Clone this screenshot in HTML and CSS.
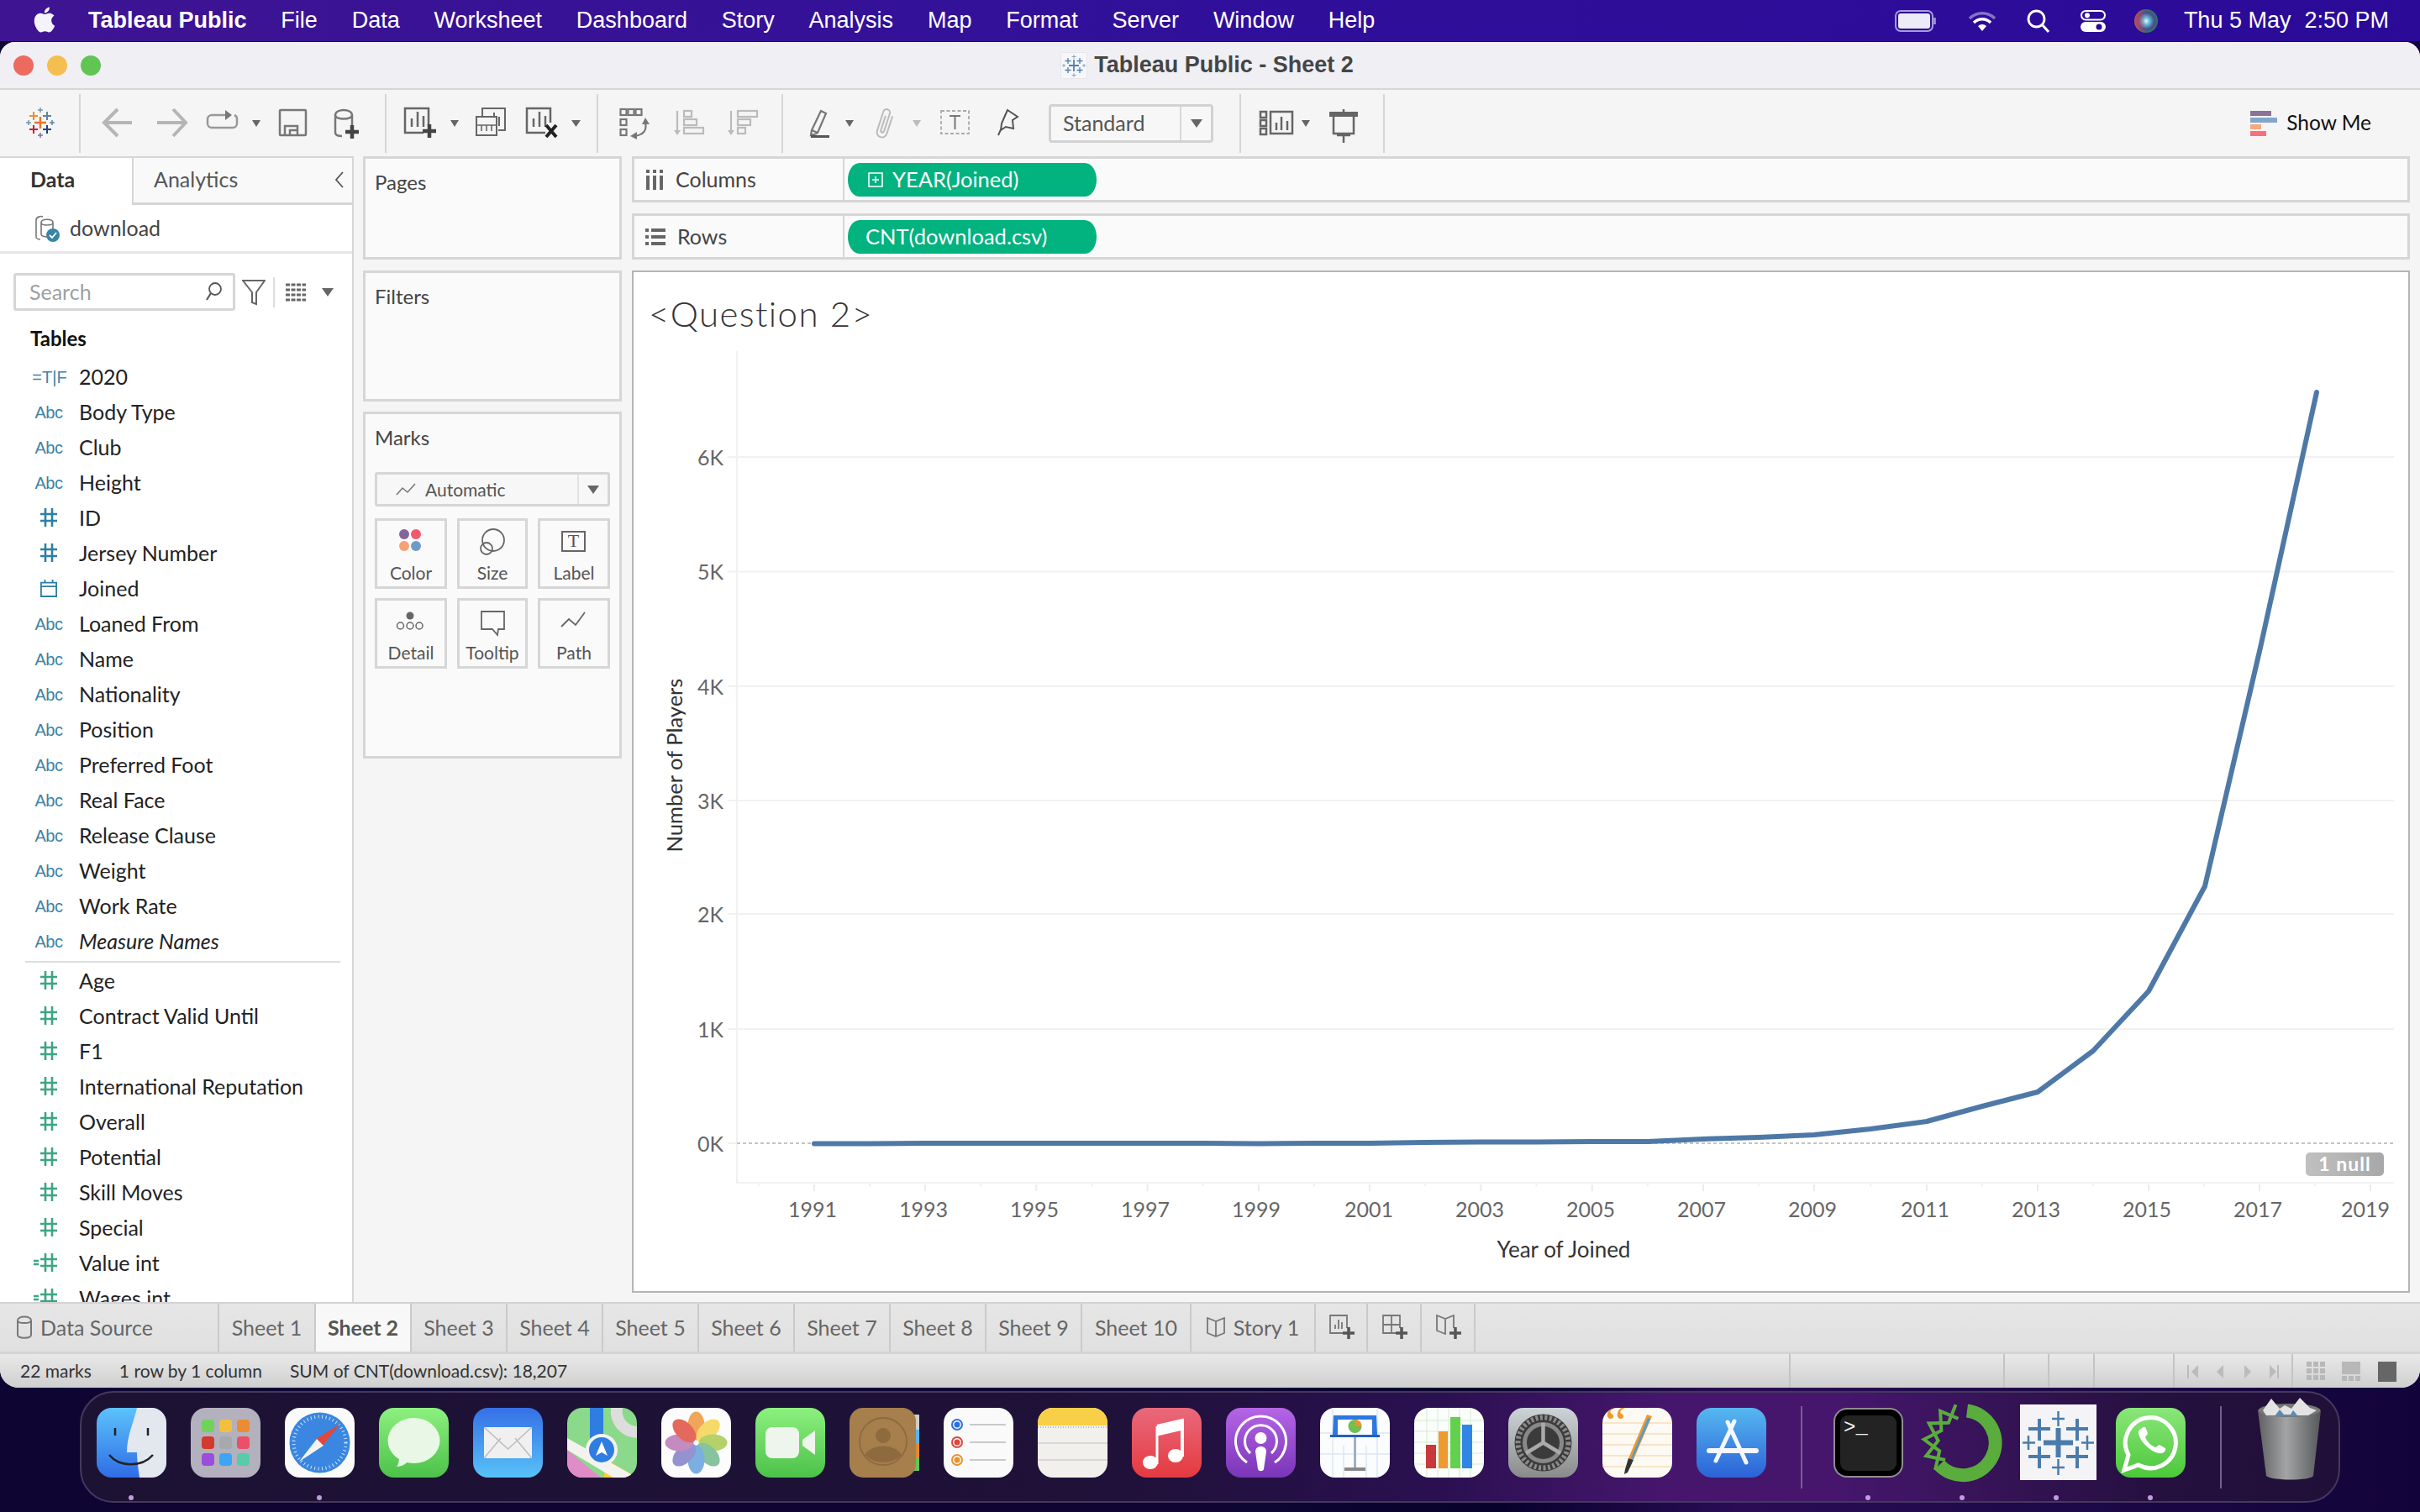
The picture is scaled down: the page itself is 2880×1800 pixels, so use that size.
FILE: index.html
```html
<!DOCTYPE html>
<html lang="en">
<head>
<meta charset="utf-8">
<title>Tableau Public - Sheet 2</title>
<link rel="stylesheet" href="styles.css">
</head>
<body>
<div class="screen">
  <header class="menubar">
    <svg class="apple" viewBox="0 0 24 24"><path d="M12.152 6.896c-.948 0-2.415-1.078-3.96-1.04-2.04.027-3.91 1.183-4.961 3.014-2.117 3.675-.546 9.103 1.519 12.09 1.013 1.454 2.208 3.09 3.792 3.039 1.52-.065 2.09-.987 3.935-.987 1.831 0 2.35.987 3.96.948 1.637-.026 2.676-1.48 3.676-2.948 1.156-1.688 1.636-3.325 1.662-3.415-.039-.013-3.182-1.221-3.22-4.857-.026-3.04 2.48-4.494 2.597-4.559-1.429-2.09-3.623-2.324-4.39-2.376-2-.156-3.675 1.09-4.61 1.09zM15.53 3.83c.843-1.012 1.4-2.427 1.245-3.83-1.207.052-2.662.805-3.532 1.818-.78.896-1.454 2.338-1.273 3.714 1.338.104 2.715-.688 3.559-1.701"/></svg>
    <nav class="menu">
      <span class="menu-app">Tableau Public</span><span>File</span><span>Data</span><span>Worksheet</span><span>Dashboard</span><span>Story</span><span>Analysis</span><span>Map</span><span>Format</span><span>Server</span><span>Window</span><span>Help</span>
    </nav>
    <div class="tray">
      <svg class="t-batt" viewBox="0 0 50 26"><rect x="1" y="1" width="44" height="24" rx="6" fill="none" stroke="#a79bdc" stroke-width="2"/><rect x="4" y="4" width="38" height="18" rx="3" fill="#ecebf7"/><path d="M47.500 9v8" stroke="#a79bdc" stroke-width="2.500"/></svg>
      <svg class="t-wifi" viewBox="0 0 34 24"><path d="M2 9a21 21 0 0 1 30 0" fill="none" stroke="#8673c9" stroke-width="3.500"/><path d="M7 14a14 14 0 0 1 20 0" fill="none" stroke="#fff" stroke-width="3.500"/><path d="M12 18a7 7 0 0 1 10 0l-5 6z" fill="#fff"/></svg>
      <svg class="t-search" viewBox="0 0 28 28"><circle cx="11.500" cy="11.500" r="9.500" fill="none" stroke="#fff" stroke-width="2.800"/><path d="M18 18l8 9" stroke="#fff" stroke-width="3"/></svg>
      <svg class="t-ctrl" viewBox="0 0 30 26"><rect x="1" y="1" width="28" height="10.500" rx="5.200" fill="none" stroke="#fff" stroke-width="2"/><circle cx="8" cy="6.200" r="3" fill="#fff"/><rect y="14" width="30" height="12" rx="6" fill="#fff"/><circle cx="22" cy="20" r="3.500" fill="#2a0a96"/></svg>
      <svg class="t-siri" viewBox="0 0 28 28"><defs><radialGradient id="siri"><stop offset="0" stop-color="#f4f4ff"/><stop offset=".3" stop-color="#5cc0d8"/><stop offset=".7" stop-color="#4a4a90"/><stop offset="1" stop-color="#2f7a60"/></radialGradient><linearGradient id="siri2" x1="0" x2="1"><stop offset="0" stop-color="#e0405a" stop-opacity=".85"/><stop offset=".5" stop-color="#e0405a" stop-opacity="0"/></linearGradient></defs><circle cx="14" cy="14" r="14" fill="url(#siri)"/><circle cx="14" cy="14" r="14" fill="url(#siri2)"/></svg>
      <span class="t-date">Thu 5 May</span><span class="t-time">2:50 PM</span>
    </div>
  </header>

  <div class="window">
    <div class="titlebar">
      <div class="lights"><i class="light red"></i><i class="light yellow"></i><i class="light green"></i></div>
      <div class="wtitle">
        <svg class="doc" viewBox="0 0 30 30"><rect width="30" height="30" fill="#f7f7fa"/><g stroke="#4f81b1" stroke-width="1.800"><path d="M15 8v14M9 15h12"/><path d="M8 6v7M4.500 9.500h7M22 6v7M18.500 9.500h7M8 17v7M4.500 20.500h7M22 17v7M18.500 20.500h7" stroke-width="1.300"/><path d="M15 2v5M12.500 4.500h5M15 24v5M12.500 26.500h5M3 13v4M1 15h4M27 13v4M25 15h4" stroke-width="1" stroke="#86a7c6"/></g></svg>
        <span>Tableau Public - Sheet 2</span>
      </div>
      <div></div>
    </div>

    <div class="toolbar">
      <div class="tg tg1">
        <svg width="94" height="70" viewBox="0 112 94 70"><g fill="none" stroke-width="2"><path d="M48 139v14M41 146h14" stroke="#e8762d" stroke-width="2.500"/><path d="M40 133v10M35 138h10" stroke="#f28e2b"/><path d="M56 133v10M51 138h10" stroke="#5b879b"/><path d="M40 149v10M35 154h10" stroke="#c72035"/><path d="M56 149v10M51 154h10" stroke="#1f447e"/><path d="M48 128v6M45 131h6" stroke="#7099a6" stroke-width="1.500"/><path d="M48 158v6M45 161h6" stroke="#7f6f9f" stroke-width="1.500"/><path d="M34 143v6M31 146h6" stroke="#7099a6" stroke-width="1.500"/><path d="M62 143v6M59 146h6" stroke="#59879b" stroke-width="1.500"/></g></svg>
      </div>
      <div class="tg tg2">
        <svg width="362" height="70" viewBox="96 112 362 70"><g fill="none"><path d="M157 146h-32M140 130l-16 16 16 16M187 146h32M206 130l15 16-15 16" stroke="#b5b5b5" stroke-width="4"/><path d="M270 137h-18a5 5 0 0 0-5 5v5a5 5 0 0 0 5 5h25a5 5 0 0 0 5-5v-5a5 5 0 0 0-3-5" stroke="#999" stroke-width="2.500"/><path d="M268 131l8 6-8 6z" fill="#777"/><rect x="333" y="131" width="31" height="30" rx="1" stroke="#777" stroke-width="2.500"/><path d="M339 161v-11h15v11M345 161v-6h9" stroke="#777" stroke-width="2.500"/><path d="M419 150v-13c0-8-20-8-20 0v21c0 3 4 4 8 4M399 137c0 6 20 6 20 0" stroke="#777" stroke-width="2.500"/><path d="M419 149v16M411 157h16" stroke="#444" stroke-width="4.500"/></g><path d="M300 143h10l-5 8z" fill="#666"/></svg>
      </div>
      <div class="tg tg3">
        <svg width="250" height="70" viewBox="460 112 250 70"><g fill="none"><path d="M510 150v-21h-28v29h22M490 151v-10M497 151v-18M504 151v-13" stroke="#666" stroke-width="2.500"/><path d="M511 148v16M503 156h16" stroke="#444" stroke-width="4.500"/><path d="M574 138v-9h27v26h-8M582 150v-10M588 150v-16M594 150v-11" stroke="#666" stroke-width="2"/><rect x="567" y="139" width="24" height="22" fill="#f5f5f5" stroke="#666" stroke-width="2"/><path d="M567 149h24M573 149v7M579 149v7M585 149v7" stroke="#666" stroke-width="1.600"/><path d="M655 146v-17h-28v29h22M635 151v-10M642 151v-18M649 151v-13" stroke="#666" stroke-width="2.500"/><path d="M650 149l12 14M662 149l-12 14" stroke="#222" stroke-width="4"/></g><path d="M536 143h10l-5 8zM680 143h11l-5.500 8z" fill="#666"/></svg>
      </div>
      <div class="tg tg4">
        <svg width="218" height="70" viewBox="712 112 218 70"><g fill="none" stroke="#777" stroke-width="2.200"><rect x="738.500" y="130" width="7" height="7"/><rect x="747.500" y="130" width="7" height="7"/><rect x="756.500" y="130" width="7" height="7"/><rect x="738.500" y="142" width="7" height="7"/><rect x="738.500" y="154" width="7" height="7"/><path d="M768 147c2 8-2 13-12 15"/></g><path d="M768 140l5 8h-9zM750 162l8-5v9z" fill="#777"/><g fill="none" stroke="#bbb" stroke-width="2.200"><path d="M806 132v26"/><rect x="814" y="132" width="9" height="7"/><rect x="814" y="142" width="15" height="7"/><rect x="814" y="152" width="23" height="7"/><path d="M870 132v26"/><rect x="878" y="132" width="23" height="7"/><rect x="878" y="142" width="15" height="7"/><rect x="878" y="152" width="9" height="7"/></g><path d="M802 155h8l-4 6zM866 155h8l-4 6z" fill="#bbb"/></svg>
      </div>
      <div class="tg tg5">
        <svg width="316" height="70" viewBox="932 112 316 70"><g fill="none"><path d="M966 155l11-23 6 3-10 23zM966 155l-1 6 7-2" stroke="#777" stroke-width="2.200"/><path d="M965 162.500h22" stroke="#555" stroke-width="3"/><path d="M1059 136v22a6 6 0 0 1-12 0v-24a4 4 0 0 1 8 0v22a2 2 0 0 1-4 0v-18" transform="rotate(18 1053 147)" stroke="#bbb" stroke-width="2"/><rect x="1120" y="132" width="33" height="27" stroke="#aaa" stroke-width="1.800" stroke-dasharray="4 2.500"/><path d="M1130 138h13M1136.500 138v16" stroke="#777" stroke-width="2"/><path d="M1199 131l12 8-6 4 1 10-9-2-6 4 1-8 3-7zM1192 152l-4 9" stroke="#555" stroke-width="2"/></g><path d="M1006 143h10l-5 8z" fill="#666"/><path d="M1086 143h10l-5 8z" fill="#bbb"/></svg>
        <div class="std"><span class="std-label">Standard</span><span class="std-btn"><i class="caret"></i></span></div>
      </div>
      <div class="tg tg6">
        <svg width="168" height="70" viewBox="1478 112 168 70"><g fill="none" stroke="#666" stroke-width="2.500"><rect x="1501" y="133" width="7" height="7"/><rect x="1501" y="143" width="7" height="7"/><rect x="1501" y="153" width="7" height="7"/><rect x="1513" y="133" width="26" height="26"/><path d="M1520 155v-9M1526 155v-16M1533 155v-11"/><path d="M1600 130v6M1588 136v23h24v-23M1600 159v11M1592 161h16"/></g><path d="M1583 133h34v6h-34z" fill="#666"/><path d="M1550 143h10l-5 8z" fill="#666"/></svg>
      </div>
      <div class="showme">
        <div class="sm-bars"><i class="sm1"></i><i class="sm2"></i><i class="sm3"></i><i class="sm4"></i></div>
        <span class="sm-text">Show Me</span>
      </div>
    </div>

    <div class="main">
      <aside class="datapane">
        <div class="dtabs"><div class="dtab-data">Data</div><div class="dtab-an"><span>Analytics</span><svg width="10" height="20" viewBox="0 0 10 20"><path d="M9 1L1 10l8 9" fill="none" stroke="#555" stroke-width="1.800"/></svg></div></div>
        <div class="source">
          <svg width="34" height="34" viewBox="0 0 34 34"><g fill="none" stroke="#777" stroke-width="1.600"><path d="M26 10c0-5-14-5-14 0v14c0 2 4 3 7 3M12 10c0 4 14 4 14 0v9M6 7v20c0 2 3 3 5 3M6 7c0-4 6-5 8-4"/></g><circle cx="26" cy="25" r="8" fill="#3a84a8"/><path d="M22 25l3 3 5-6" fill="none" stroke="#fff" stroke-width="1.800"/></svg>
          <span class="src-text">download</span>
        </div>
        <div class="searchrow">
          <div class="search"><span>Search</span><svg width="20" height="24" viewBox="0 0 20 24"><circle cx="12" cy="9" r="7" fill="none" stroke="#555" stroke-width="1.800"/><path d="M7 14l-5 8" stroke="#555" stroke-width="2"/></svg></div>
          <svg class="fil" width="28" height="32" viewBox="0 0 28 32"><path d="M1 2h26L17 16v14l-5-2V16z" fill="none" stroke="#666" stroke-width="2"/></svg>
          <i class="sdiv"></i>
          <svg class="lst" width="26" height="24" viewBox="0 0 26 24"><path d="M1 3h24M1 9h24M1 15h24M1 21h24" stroke="#666" stroke-width="3" stroke-dasharray="5 1.500"/></svg>
          <i class="caret carets"></i>
        </div>
        <div class="tables">Tables</div>
        <ul class="fields">
          <li><span class="ft bl tf">=T|F</span>2020</li>
          <li><span class="ft bl">Abc</span>Body Type</li>
          <li><span class="ft bl">Abc</span>Club</li>
          <li><span class="ft bl">Abc</span>Height</li>
          <li><span class="ft"><svg class="hash hb" viewBox="0 0 20 24"><path d="M6 1v22M14 1v22M0 8h20M0 16h20"/></svg></span>ID</li>
          <li><span class="ft"><svg class="hash hb" viewBox="0 0 20 24"><path d="M6 1v22M14 1v22M0 8h20M0 16h20"/></svg></span>Jersey Number</li>
          <li><span class="ft"><svg class="hash hb" viewBox="0 0 22 24"><path d="M1 5h20v18H1zM1 10h20M6 1v5M16 1v5" stroke-width="2"/></svg></span>Joined</li>
          <li><span class="ft bl">Abc</span>Loaned From</li>
          <li><span class="ft bl">Abc</span>Name</li>
          <li><span class="ft bl">Abc</span>Nationality</li>
          <li><span class="ft bl">Abc</span>Position</li>
          <li><span class="ft bl">Abc</span>Preferred Foot</li>
          <li><span class="ft bl">Abc</span>Real Face</li>
          <li><span class="ft bl">Abc</span>Release Clause</li>
          <li><span class="ft bl">Abc</span>Weight</li>
          <li><span class="ft bl">Abc</span>Work Rate</li>
          <li class="it"><span class="ft bl">Abc</span>Measure Names</li>
          <li class="sep"></li>
          <li><span class="ft"><svg class="hash hg" viewBox="0 0 20 24"><path d="M6 1v22M14 1v22M0 8h20M0 16h20"/></svg></span>Age</li>
          <li><span class="ft"><svg class="hash hg" viewBox="0 0 20 24"><path d="M6 1v22M14 1v22M0 8h20M0 16h20"/></svg></span>Contract Valid Until</li>
          <li><span class="ft"><svg class="hash hg" viewBox="0 0 20 24"><path d="M6 1v22M14 1v22M0 8h20M0 16h20"/></svg></span>F1</li>
          <li><span class="ft"><svg class="hash hg" viewBox="0 0 20 24"><path d="M6 1v22M14 1v22M0 8h20M0 16h20"/></svg></span>International Reputation</li>
          <li><span class="ft"><svg class="hash hg" viewBox="0 0 20 24"><path d="M6 1v22M14 1v22M0 8h20M0 16h20"/></svg></span>Overall</li>
          <li><span class="ft"><svg class="hash hg" viewBox="0 0 20 24"><path d="M6 1v22M14 1v22M0 8h20M0 16h20"/></svg></span>Potential</li>
          <li><span class="ft"><svg class="hash hg" viewBox="0 0 20 24"><path d="M6 1v22M14 1v22M0 8h20M0 16h20"/></svg></span>Skill Moves</li>
          <li><span class="ft"><svg class="hash hg" viewBox="0 0 20 24"><path d="M6 1v22M14 1v22M0 8h20M0 16h20"/></svg></span>Special</li>
          <li><span class="ft"><svg class="hash hg calc" viewBox="0 0 28 24"><path d="M14 1v22M22 1v22M8 8h20M8 16h20M0 10h6M0 14h6"/></svg></span>Value int</li>
          <li><span class="ft"><svg class="hash hg calc" viewBox="0 0 28 24"><path d="M14 1v22M22 1v22M8 8h20M8 16h20M0 10h6M0 14h6"/></svg></span>Wages int</li>
        </ul>
      </aside>

      <section class="cards">
        <div class="card c-pages"><h3>Pages</h3></div>
        <div class="card c-filters"><h3>Filters</h3></div>
        <div class="card c-marks">
          <h3>Marks</h3>
          <div class="markdd">
            <svg width="24" height="16" viewBox="0 0 24 16"><path d="M1 14l7-8 6 5 9-10" fill="none" stroke="#777" stroke-width="1.600"/></svg>
            <span class="md-text">Automatic</span><span class="md-btn"><i class="caret"></i></span>
          </div>
          <div class="markgrid">
            <div class="mk"><svg viewBox="465 625 48 44"><circle cx="481" cy="636" r="6" fill="#84659a"/><circle cx="495" cy="636" r="6" fill="#f0596e"/><circle cx="481" cy="650" r="6" fill="#f5a176"/><circle cx="495" cy="650" r="6" fill="#6d9bc9"/></svg><span>Color</span></div>
            <div class="mk"><svg viewBox="562 625 48 44"><g fill="none" stroke="#666" stroke-width="1.800"><circle cx="587" cy="643" r="13"/><circle cx="579" cy="653" r="7"/></g></svg><span>Size</span></div>
            <div class="mk"><svg viewBox="659 625 48 44"><rect x="669" y="633" width="27" height="23" fill="none" stroke="#666" stroke-width="2"/><text x="682.500" y="651" class="mk-t">T</text></svg><span>Label</span></div>
            <div class="mk"><svg viewBox="465 720 48 44"><circle cx="488" cy="733" r="4.500" fill="#666"/><g fill="none" stroke="#666" stroke-width="1.500"><circle cx="476.500" cy="745" r="4"/><circle cx="488" cy="745" r="4"/><circle cx="499" cy="745" r="4"/></g></svg><span>Detail</span></div>
            <div class="mk"><svg viewBox="562 720 48 44"><path d="M573 728h27v21h-7l-1 7-6-7h-13z" fill="none" stroke="#666" stroke-width="1.800"/></svg><span>Tooltip</span></div>
            <div class="mk"><svg viewBox="659 720 48 44"><path d="M668 746l9-9 8 7 11-15" fill="none" stroke="#666" stroke-width="1.800"/></svg><span>Path</span></div>
          </div>
        </div>
      </section>

      <section class="work">
        <div class="shelf s-cols">
          <div class="shelf-label"><svg width="22" height="24" viewBox="0 0 22 24"><path d="M1 0h4v4H1zM9 0h4v4H9zM17 0h4v4h-4z" fill="#666"/><path d="M1 7h4v17H1zM9 7h4v17H9zM17 7h4v17h-4z" fill="#666"/></svg><span class="sh-text">Columns</span></div>
          <div class="pill"><svg width="18" height="18" viewBox="0 0 18 18"><path d="M1 1h16v16H1zM9 5v8M5 9h8" fill="none" stroke="#fff" stroke-width="1.600"/></svg><span class="sh-text">YEAR(Joined)</span></div>
        </div>
        <div class="shelf s-rows">
          <div class="shelf-label"><svg width="24" height="20" viewBox="0 0 24 20"><path d="M0 0h4v4H0zM7 0h17v4H7zM0 8h4v4H0zM7 8h17v4H7zM0 16h4v4H0zM7 16h17v4H7z" fill="#666"/></svg><span class="sh-text">Rows</span></div>
          <div class="pill pill-cnt"><span class="sh-text">CNT(download.csv)</span></div>
        </div>
        <div class="viz">
          <svg class="chart" viewBox="754 324 2112 1213">
            <text x="772" y="389" class="c-title">&lt;Question 2&gt;</text>
            <g class="grid">
              <path d="M877 418V1408H2849"/>
              <path d="M866 544H2849M866 680.500H2849M866 817H2849M866 953H2849M866 1088H2849M866 1225H2849M866 1361H877"/>
            </g>
            <path class="zero" d="M877 1361H2849"/>
            <g class="ticks"><path d="M969 1410v8M1101 1410v8M1233.300 1410v8M1365.600 1410v8M1497.800 1410v8M1630 1410v8M1762.400 1410v8M1894.700 1410v8M2027 1410v8M2159 1410v8M2293 1410v8M2425 1410v8M2557 1410v8M2689 1410v8M2821 1410v8"/><path d="M903 1410v2M1035 1410v2M1167 1410v2M1299.500 1410v2M1431.700 1410v2M1564 1410v2M1696 1410v2M1828.500 1410v2M1960.800 1410v2M2093 1410v2M2226 1410v2M2359 1410v2M2491 1410v2M2623 1410v2M2755 1410v2"/></g>
            <polyline class="line" points="969,1361.500 1035,1361.500 1101,1361 1167,1361 1234,1361 1300,1361 1366,1361 1432,1361 1498,1361.500 1564,1361 1630,1361 1696,1360 1762,1359.500 1829,1359.500 1895,1359 1961,1359 2027,1356 2093,1354 2159,1351 2226,1344 2293,1335 2359,1317 2425,1300 2491,1251 2557,1180 2624,1055 2690,771 2757,467"/>
            <g class="ylab">
              <text x="861" y="554">6K</text><text x="861" y="690">5K</text><text x="861" y="827">4K</text><text x="861" y="963">3K</text><text x="861" y="1098">2K</text><text x="861" y="1235">1K</text><text x="861" y="1371">0K</text>
            </g>
            <g class="xlab">
              <text x="967" y="1449">1991</text><text x="1099" y="1449">1993</text><text x="1231" y="1449">1995</text><text x="1363" y="1449">1997</text><text x="1495" y="1449">1999</text><text x="1629" y="1449">2001</text><text x="1761" y="1449">2003</text><text x="1893" y="1449">2005</text><text x="2025" y="1449">2007</text><text x="2157" y="1449">2009</text><text x="2291" y="1449">2011</text><text x="2423" y="1449">2013</text><text x="2555" y="1449">2015</text><text x="2687" y="1449">2017</text><text x="2815" y="1449">2019</text>
            </g>
            <text class="axt" x="1861" y="1497">Year of Joined</text>
            <text class="axt axy" transform="translate(812 911) rotate(-90)">Number of Players</text>
            <defs><linearGradient id="nullg" x1="0" x2="1"><stop offset="0" stop-color="#c0c0c0"/><stop offset="1" stop-color="#a8a8a8"/></linearGradient></defs>
            <rect x="2744" y="1372" width="93" height="28" rx="5" fill="url(#nullg)"/>
            <text x="2790.500" y="1394" class="nullt">1 null</text>
          </svg>
        </div>
      </section>
    </div>

    <div class="tabs">
      <div class="tab t-ds"><svg width="18" height="28" viewBox="0 0 18 28"><path d="M1 6c0-6 16-6 16 0v17c0 5-16 5-16 0zM1 6c0 4 16 4 16 0" fill="none" stroke="#777" stroke-width="2"/></svg><span>Data Source</span></div>
      <div class="tab t-s1">Sheet 1</div>
      <div class="tab t-active">Sheet 2</div>
      <div class="tab">Sheet 3</div>
      <div class="tab">Sheet 4</div>
      <div class="tab">Sheet 5</div>
      <div class="tab">Sheet 6</div>
      <div class="tab">Sheet 7</div>
      <div class="tab">Sheet 8</div>
      <div class="tab">Sheet 9</div>
      <div class="tab t-10">Sheet 10</div>
      <div class="tab t-story"><svg width="22" height="24" viewBox="0 0 22 24"><path d="M11 5L1 1v18l10 4 10-4V1zM11 5v18" fill="none" stroke="#777" stroke-width="1.800"/></svg><span>Story 1</span></div>
      <div class="tab t-add"><svg width="32" height="30" viewBox="0 0 32 30"><path d="M20 22H1V1h20v15M7 17v-5M11 17V6M15 17V9" fill="none" stroke="#777" stroke-width="1.800"/><path d="M23 15v14M16 22h14" stroke="#555" stroke-width="3.500"/></svg></div>
      <div class="tab t-add2"><svg width="32" height="30" viewBox="0 0 32 30"><path d="M18 22H1V1h20v15M1 12h20M11 1v21" fill="none" stroke="#777" stroke-width="1.800"/><path d="M23 15v14M16 22h14" stroke="#555" stroke-width="3.500"/></svg></div>
      <div class="tab t-add2"><svg width="32" height="30" viewBox="0 0 32 30"><path d="M11 5L1 1v18l10 4V5l10-4v15" fill="none" stroke="#777" stroke-width="1.800"/><path d="M23 15v14M16 22h14" stroke="#555" stroke-width="3.500"/></svg></div>
    </div>

    <div class="status">
      <span class="st-a">22 marks</span><span class="st-b">1 row by 1 column</span><span class="st-c">SUM of CNT(download.csv): 18,207</span>
      <i class="st-sp s1"></i><i class="st-sp s2"></i><i class="st-sp s3"></i><i class="st-sp s4"></i><i class="st-sp s5"></i>
      <svg class="st-nav" width="110" height="20" viewBox="0 0 110 20"><g fill="#bbb"><path d="M1 2h2v16H1zM14 2v16L6 10zM44 2v16l-8-8zM69 2v16l8-8zM99 2v16l8-8zM108 2h2v16h-2z"/></g></svg>
      <i class="st-sp s6"></i>
      <svg class="st-grid" width="110" height="24" viewBox="0 0 110 24"><g fill="#b8b8b8"><path d="M0 0h6v6H0zM8 0h6v6H8zM16 0h6v6h-6zM0 8h6v6H0zM8 8h6v6H8zM16 8h6v6h-6zM0 16h6v6H0zM8 16h6v6H8zM16 16h6v6h-6z"/><path d="M42 0h22v15H42zM42 17h6v6h-6zM50 17h6v6h-6zM58 17h6v6h-6z"/></g><path d="M85 0h22v24H85z" fill="#666"/></svg>
    </div>
  </div>

  <div class="dock">
    <div class="di"><svg viewBox="0 0 83 83"><defs><linearGradient id="f1" x1="0" y1="0" x2="0" y2="1"><stop offset="0" stop-color="#5cc3fb"/><stop offset="1" stop-color="#2f6ce6"/></linearGradient><clipPath id="rr"><rect width="83" height="83" rx="18"/></clipPath></defs><rect width="83" height="83" rx="18" fill="url(#f1)"/><path d="M48 0h17a18 18 0 0 1 18 18v47a18 18 0 0 1-18 18H51c-2-14-3-22-3-30H36c0-20 8-35 12-53z" fill="#e3e7ee"/><path d="M22 24v9M61 24v9" stroke="#222" stroke-width="2.500"/><path d="M15 56c12 15 39 15 52 0" fill="none" stroke="#222" stroke-width="2.500"/></svg><i class="dot"></i></div>
    <div class="di"><svg viewBox="0 0 83 83"><rect width="83" height="83" rx="18" fill="#b3b1bd"/><g><rect x="13" y="14" width="15" height="15" rx="4" fill="#6fd35a"/><rect x="34" y="14" width="15" height="15" rx="4" fill="#f3c03e"/><rect x="55" y="14" width="15" height="15" rx="4" fill="#ea8c34"/><rect x="13" y="34" width="15" height="15" rx="4" fill="#d33a2c"/><rect x="34" y="34" width="15" height="15" rx="4" fill="#a5a9ac"/><rect x="55" y="34" width="15" height="15" rx="4" fill="#ea5067"/><rect x="13" y="54" width="15" height="15" rx="4" fill="#9b4ddb"/><rect x="34" y="54" width="15" height="15" rx="4" fill="#3ca5f5"/><rect x="55" y="54" width="15" height="15" rx="4" fill="#5acba8"/></g></svg></div>
    <div class="di"><svg viewBox="0 0 83 83"><rect width="83" height="83" rx="18" fill="#fafafa"/><circle cx="41.500" cy="41.500" r="36" fill="#3a86e0"/><circle cx="41.500" cy="41.500" r="31" fill="none" stroke="#cfe4fa" stroke-width="4" stroke-dasharray="1 3.500"/><path d="M66 19L37 37l8 8z" fill="#e0483c"/><path d="M17 64l29-19-8-8z" fill="#f4f4f4"/></svg><i class="dot"></i></div>
    <div class="di"><svg viewBox="0 0 83 83"><defs><linearGradient id="g1" x1="0" y1="0" x2="0" y2="1"><stop offset="0" stop-color="#8df07f"/><stop offset="1" stop-color="#4cc24a"/></linearGradient></defs><rect width="83" height="83" rx="18" fill="url(#g1)"/><ellipse cx="41.500" cy="39" rx="31" ry="27" fill="#e9f7e6"/><path d="M24 58c0 6-1 10-3 12 7 0 12-4 15-8z" fill="#e9f7e6"/></svg></div>
    <div class="di"><svg viewBox="0 0 83 83"><defs><linearGradient id="m1" x1="0" y1="0" x2="0" y2="1"><stop offset="0" stop-color="#3570e6"/><stop offset="1" stop-color="#58c2f8"/></linearGradient></defs><rect width="83" height="83" rx="18" fill="url(#m1)"/><rect x="13" y="23" width="57" height="37" rx="2" fill="#f0f0f0"/><path d="M13 23l28.500 26L70 23M13 60l20-24M70 60L50 36" fill="none" stroke="#bdbdbd" stroke-width="1.500"/></svg></div>
    <div class="di"><svg viewBox="0 0 83 83"><g clip-path="url(#rr)"><rect width="83" height="83" fill="#8bd98a"/><path d="M0 50l40 33H0z" fill="#e08cc8"/><path d="M44 60L83 83H44z" fill="#f5cf3e"/><path d="M0 36L83 83H55L0 50z" fill="#f4f2ee"/><rect x="27" y="0" width="16" height="40" fill="#2e7de0"/><path d="M52 0a32 32 0 0 0 31 36V22A18 18 0 0 1 66 0z" fill="#ddd"/></g><circle cx="41" cy="50" r="19" fill="#f2f2f2"/><circle cx="41" cy="50" r="15" fill="#2e7de0"/><path d="M41 40l7 17-7-4-7 4z" fill="#fff"/></svg></div>
    <div class="di"><svg viewBox="0 0 83 83"><rect width="83" height="83" rx="18" fill="#fcfcfc"/><g transform="translate(41.500 41.500)" opacity=".82"><ellipse cy="-20" rx="10" ry="17" fill="#ef9236"/><ellipse cy="-20" rx="10" ry="17" fill="#f6d24a" transform="rotate(45)"/><ellipse cy="-20" rx="10" ry="17" fill="#a5c949" transform="rotate(90)"/><ellipse cy="-20" rx="10" ry="17" fill="#6db78a" transform="rotate(135)"/><ellipse cy="-20" rx="10" ry="17" fill="#5f9fdc" transform="rotate(180)"/><ellipse cy="-20" rx="10" ry="17" fill="#7f7cc6" transform="rotate(225)"/><ellipse cy="-20" rx="10" ry="17" fill="#b773b4" transform="rotate(270)"/><ellipse cy="-20" rx="10" ry="17" fill="#dd4a3a" transform="rotate(315)"/></g></svg></div>
    <div class="di"><svg viewBox="0 0 83 83"><rect width="83" height="83" rx="18" fill="url(#g1)"/><rect x="12" y="23" width="40" height="37" rx="8" fill="#eef5ec"/><path d="M56 38l15-11v29L56 45z" fill="#eef5ec"/></svg></div>
    <div class="di"><svg viewBox="0 0 83 83"><rect x="60" y="8" width="23" height="18" fill="#d2cdc5"/><rect x="60" y="26" width="23" height="17" fill="#5ab4ea"/><rect x="60" y="43" width="23" height="17" fill="#e28a2d"/><rect x="60" y="60" width="23" height="15" fill="#66c45a"/><rect width="79" height="83" rx="16" fill="#a67f4c"/><g fill="none" stroke="#8d6b3f" stroke-width="1.800"><circle cx="40" cy="40" r="28"/></g><circle cx="40" cy="33" r="9" fill="#8d6b3f"/><path d="M18 56c8-14 36-14 44 0-12 12-32 12-44 0z" fill="#8d6b3f"/></svg></div>
    <div class="di"><svg viewBox="0 0 83 83"><rect width="83" height="83" rx="18" fill="#fafafa"/><g fill="none" stroke-width="2"><circle cx="16" cy="20" r="6" stroke="#2d70e0"/><circle cx="16" cy="41" r="6" stroke="#e0463a"/><circle cx="16" cy="62" r="6" stroke="#e89230"/></g><circle cx="16" cy="20" r="3.500" fill="#2d70e0"/><circle cx="16" cy="41" r="3.500" fill="#e0463a"/><circle cx="16" cy="62" r="3.500" fill="#e89230"/><path d="M31 20h43M31 41h43M31 62h43" stroke="#c9c9c9" stroke-width="2"/></svg></div>
    <div class="di"><svg viewBox="0 0 83 83"><g clip-path="url(#rr)"><rect width="83" height="83" fill="#f1f0ec"/><rect width="83" height="21" fill="#f8cf47"/><path d="M0 23h83" stroke="#bbb" stroke-width="2" stroke-dasharray="1 2"/><path d="M0 42h83M0 62h83" stroke="#d8d8d4" stroke-width="2"/></g></svg></div>
    <div class="di"><svg viewBox="0 0 83 83"><defs><linearGradient id="mu" x1="0" y1="0" x2="0" y2="1"><stop offset="0" stop-color="#e9697c"/><stop offset="1" stop-color="#e53a3f"/></linearGradient></defs><rect width="83" height="83" rx="18" fill="url(#mu)"/><path d="M30 22l30-7v43" fill="none" stroke="#fff" stroke-width="4"/><path d="M30 22v45M30 24l30-7v8l-30 7z" fill="#fff" stroke="#fff" stroke-width="3"/><ellipse cx="22" cy="65" rx="9" ry="8" fill="#fff"/><ellipse cx="52" cy="57" rx="9" ry="8" fill="#fff"/></svg></div>
    <div class="di"><svg viewBox="0 0 83 83"><defs><linearGradient id="po" x1="0" y1="0" x2="0" y2="1"><stop offset="0" stop-color="#b565e6"/><stop offset="1" stop-color="#7a35b8"/></linearGradient></defs><rect width="83" height="83" rx="18" fill="url(#po)"/><g fill="none" stroke="#fff" stroke-width="3"><path d="M25 65a30 30 0 1 1 33 0"/><path d="M29 54a19 19 0 1 1 25 0"/></g><circle cx="41.500" cy="36" r="7" fill="#fff"/><path d="M35 52c0-8 13-8 13 0l-3 21c-1 3-6 3-7 0z" fill="#fff"/></svg></div>
    <div class="di"><svg viewBox="0 0 83 83"><rect width="83" height="83" rx="18" fill="#fafcfd"/><path d="M0 30h83M0 55h83M15 0v83M68 0v83M28 45v38M55 45v38" stroke="#dbe8f2" stroke-width="1.500"/><path d="M16 9h51l1 23H15z" fill="#2d78e0"/><rect x="21" y="14" width="41" height="18" fill="#fff"/><circle cx="41.500" cy="22" r="8" fill="#6fbf52"/><path d="M41.500 22V14a8 8 0 0 1 8 8z" fill="#f09030"/><path d="M12 32h59v3H12z" fill="#225fc0"/><rect x="40" y="35" width="3" height="38" fill="#9fb0c0"/><rect x="29" y="71" width="25" height="4" fill="#888"/></svg></div>
    <div class="di"><svg viewBox="0 0 83 83"><rect width="83" height="83" rx="18" fill="#fbfdfa"/><path d="M0 15h83M0 28h83M0 41h83M0 54h83M0 67h83M15 0v83M28 0v83M41 0v83M54 0v83M67 0v83" stroke="#d4ecd0" stroke-width="1"/><rect x="14" y="44" width="12" height="28" fill="#c9383b"/><rect x="29" y="28" width="11" height="44" fill="#ef9a30"/><rect x="43" y="11" width="12" height="61" fill="#63d04e"/><rect x="57" y="20" width="12" height="52" fill="#2f86e6"/></svg></div>
    <div class="di"><svg viewBox="0 0 83 83"><defs><linearGradient id="sy" x1="0" y1="0" x2="0" y2="1"><stop offset="0" stop-color="#ccd4d8"/><stop offset="1" stop-color="#8a8a8a"/></linearGradient></defs><rect width="83" height="83" rx="18" fill="url(#sy)"/><circle cx="41.500" cy="41.500" r="34" fill="#3b3b3b"/><circle cx="41.500" cy="41.500" r="30" fill="none" stroke="#8b8b8b" stroke-width="6" stroke-dasharray="3 2.500"/><circle cx="41.500" cy="41.500" r="22" fill="none" stroke="#888" stroke-width="5"/><path d="M41.500 41.500V18M41.500 41.500L21 54M41.500 41.500L62 54" stroke="#aaa" stroke-width="4.500"/></svg></div>
    <div class="di"><svg viewBox="0 0 83 83"><g clip-path="url(#rr)"><rect width="83" height="83" fill="#fdfaf4"/><path d="M0 18h83M0 31h83M0 44h83M0 57h83M0 70h83" stroke="#f7e5c9" stroke-width="2"/><text x="3" y="36" class="pg-q">“</text></g><path d="M53 8l6 2-22 52-6-2z" fill="#ef9a30"/><path d="M31 60l6 2-7 15-4 2 1-6z" fill="#333"/><path d="M54 12l3 1-21 48-2-1z" fill="#4a9fd8"/></svg></div>
    <div class="di"><svg viewBox="0 0 83 83"><defs><linearGradient id="as" x1="0" y1="0" x2="0" y2="1"><stop offset="0" stop-color="#56b8f0"/><stop offset="1" stop-color="#2b62d8"/></linearGradient></defs><rect width="83" height="83" rx="18" fill="url(#as)"/><g stroke="#f4f8fd" stroke-width="5" stroke-linecap="round"><path d="M45 16L23 63M37 17l22 48"/><path d="M15 51h56" stroke-width="6"/></g></svg></div>
    <i class="ddiv d1"></i>
    <div class="di"><svg viewBox="0 0 83 83"><rect width="83" height="83" rx="16" fill="#8f8f8f"/><rect x="2" y="2" width="79" height="79" rx="14" fill="#000"/><rect x="8" y="9" width="67" height="66" rx="9" fill="#232323"/><text x="12" y="30" class="term">&gt;_</text></svg><i class="dot"></i></div>
    <div class="di"><svg viewBox="0 0 83 83"><path d="M47 3.500A38.500 38.500 0 1 1 14 68" fill="none" stroke="#5aac3d" stroke-width="16"/><g fill="none" stroke="#5aac3d" stroke-width="4"><polyline points="9,74 14.200,51.400 -4.300,37.500 16.400,27 15.100,3.800 36.500,12.900"/><polyline points="21,62 -1.700,57.200 12.600,39 1.700,18.500 24.900,17.700 33.500,-3.800"/></g></svg><i class="dot"></i></div>
    <div class="di di-tb"><svg viewBox="0 0 83 83"><rect x="-4" y="-4" width="91" height="90" fill="#f4f4f6"/><g stroke="#4a7cab" fill="none"><path d="M41.500 24v35M24 41.500h35" stroke-width="6"/><path d="M19 13v26M6 25h26M64 13v26M51 25h26M19 46v26M6 58h26M64 46v26M51 58h26" stroke-width="4"/><path d="M41.500 4v18M34 13h15M41.500 61v19M34 71h15M6 33v17M-1 41.500h15M76 33v17M69 41.500h15" stroke-width="2.500"/></g></svg><i class="dot"></i></div>
    <div class="di"><svg viewBox="0 0 83 83"><defs><linearGradient id="wa" x1="0" y1="0" x2="0" y2="1"><stop offset="0" stop-color="#8be67a"/><stop offset="1" stop-color="#4cc83a"/></linearGradient></defs><rect width="83" height="83" rx="18" fill="url(#wa)"/><path d="M10 74l5-18a30 30 0 1 1 12 12z" fill="none" stroke="#fff" stroke-width="5"/><path d="M30 25c3-3 5-3 6 0l2 5c0 2-3 4-3 5 2 5 7 10 12 12 2 0 3-3 5-3l5 3c3 1 3 3 0 6-8 6-30-12-30-24 0-2 1-3 3-4z" fill="#fff"/></svg><i class="dot"></i></div>
    <i class="ddiv d2"></i>
    <div class="di"><svg viewBox="0 0 83 83"><defs><linearGradient id="tr" x1="0" x2="1"><stop offset="0" stop-color="#5e6062"/><stop offset=".45" stop-color="#a2a4a5"/><stop offset="1" stop-color="#55585a"/></linearGradient></defs><path d="M4 3h75l-9 78c-3 6-50 6-56 0z" fill="url(#tr)"/><ellipse cx="41.500" cy="3" rx="37" ry="8" fill="#777"/><path d="M10 3l10-14 10 12 6-4 8 4 10-13 12 12 8 3-10 6H14z" fill="#e3e3e3"/><path d="M30 2l5 6h8l3-5 6 7H24z" fill="#5a8ab0"/></svg></div>
  </div>
</div>
</body>
</html>
```

FILE: styles.css
```css
* { box-sizing: border-box; }
html, body { margin: 0; padding: 0; }
body { width: 2880px; height: 1800px; overflow: hidden; font-family: "Lato", "Liberation Sans", sans-serif; color: #333; }
i { display: block; font-style: normal; }
h3 { margin: 0; font-weight: 400; font-size: 24px; color: #444; }
ul { list-style: none; margin: 0; padding: 0; }

.screen { width: 2880px; height: 1800px; display: flex; flex-direction: column; background: linear-gradient(90deg, #0e0533 0, #0e0533 50%, #07022c 62%, #2a0c55 72%, #1a0845 88%, #12043a 100%); overflow: hidden; }

.menubar { height: 50px; flex: none; display: flex; align-items: center; padding-left: 40px; background: linear-gradient(90deg, #3e1492 0, #30109a 50%, #2a0a97 100%); color: #fff; font-family: "Liberation Sans", Arial, sans-serif; font-size: 27px; border-bottom: 1px solid #0c0430; }
.apple { width: 30px; height: 31px; fill: #f4f2fa; margin-left: -2px; margin-bottom: 3px; }
.menu { display: flex; margin-left: 37px; gap: 40.800px; }
.menu-app { font-weight: 700; }
.tray { margin-left: auto; padding-right: 37px; display: flex; align-items: center; }
.t-batt { width: 50px; height: 26px; }
.t-wifi { width: 34px; height: 24px; margin-left: 37px; }
.t-search { width: 28px; height: 28px; margin-left: 36px; }
.t-ctrl { width: 30px; height: 26px; margin-left: 36px; }
.t-siri { width: 28px; height: 28px; margin-left: 34px; }
.t-date { margin-left: 31px; }
.t-time { margin-left: 16px; }

.window { height: 1602px; flex: none; display: flex; flex-direction: column; border-radius: 18px 18px 22px 22px; overflow: hidden; background: #f5f5f5; }

.titlebar { height: 57px; flex: none; display: grid; grid-template-columns: 1fr auto 1fr; align-items: center; background: #f0eff4; border-bottom: 2px solid #d6d6d6; }
.lights { display: flex; gap: 16px; padding-left: 16px; }
.light { width: 24px; height: 24px; border-radius: 50%; }
.red { background: #ed6a5e; }
.yellow { background: #f5bf4f; }
.green { background: #61c554; }
.wtitle { display: flex; align-items: center; gap: 9px; margin-right: 6px; font-size: 27px; font-weight: 700; color: #454545; font-family: "Liberation Sans", sans-serif; }
.doc { width: 30px; height: 30px; box-shadow: 0 0 1px #bbb; }

.toolbar { height: 79px; flex: none; display: flex; align-items: center; background: #f5f5f5; }
.tg { height: 70px; display: flex; align-items: center; border-right: 2px solid #d6d6d6; flex: none; }
.tg svg { display: block; overflow: visible; }
.tg1 { width: 96px; }
.tg2 { width: 364px; }
.tg3 { width: 252px; }
.tg4 { width: 220px; }
.tg5 { width: 545px; }
.tg6 { width: 171px; }
.std { width: 196px; height: 46px; display: flex; align-items: stretch; border: 3px solid #d2d2d2; border-radius: 4px; font-size: 25px; color: #555; background: #f7f7f7; }
.std-label { flex: 1; display: flex; align-items: center; padding: 0 0 2px 14px; }
.std-btn { width: 37px; border-left: 2px solid #d8d8d8; display: flex; align-items: center; justify-content: center; }
.caret { width: 0; height: 0; border-left: 7px solid transparent; border-right: 7px solid transparent; border-top: 10px solid #666; }
.showme { margin-left: auto; margin-right: 58px; display: flex; align-items: center; gap: 11px; font-size: 24.500px; color: #111; }
.sm-text { padding-bottom: 2px; }
.sm-bars { display: flex; flex-direction: column; gap: 2px; width: 32px; }
.sm-bars i { height: 6px; }
.sm1 { width: 25px; background: #8b7396; }
.sm2 { width: 32px; background: #83a6c9; }
.sm3 { width: 13px; background: #f3a97e; }
.sm4 { width: 19px; background: #f6707f; }

.main { height: 1364px; flex: none; display: flex; background: #f5f5f5; }

.datapane { width: 421px; flex: none; background: #fff; border-right: 2px solid #d6d6d6; overflow: hidden; display: flex; flex-direction: column; border-top: 2px solid #d6d6d6; }
.dtabs { height: 56px; flex: none; display: flex; font-size: 25px; }
.dtab-data { width: 157px; padding: 10px 0 0 36px; font-weight: 700; color: #333; }
.dtab-an { flex: 1; padding: 10px 10px 0 24px; display: flex; justify-content: space-between; background: #f9f9f9; border-left: 2px solid #d6d6d6; border-bottom: 3px solid #d6d6d6; color: #555; }
.dtab-an svg { margin-top: 6px; }
.source { height: 58px; flex: none; display: flex; align-items: center; padding-left: 37px; gap: 12px; font-size: 25px; color: #444; border-bottom: 3px solid #e6e6e6; }
.src-text { padding-bottom: 2px; }
.searchrow { display: flex; align-items: center; padding: 23px 0 0 16px; flex: none; }
.search { width: 264px; height: 45px; border: 3px solid #d6d6d6; border-radius: 3px; display: flex; align-items: center; justify-content: space-between; padding: 0 13px 2px 16px; font-size: 25px; color: #a0a0a0; background: #fff; }
.fil { margin-left: 8px; }
.sdiv { width: 2px; height: 36px; background: #ddd; margin-left: 9px; }
.lst { margin-left: 12px; }
.carets { margin-left: 18px; }
.tables { height: 41px; margin-top: 12px; flex: none; padding-left: 36px; font-size: 24px; font-weight: 700; color: #111; line-height: 41px; }
.fields { margin-top: 4px; font-size: 25px; color: #222; }
.fields li { height: 42px; display: flex; align-items: center; white-space: nowrap; }
.fields li.sep { height: 2px; margin: 3px 14px 0 30px; background: #ddd; }
.fields li.it { font-style: italic; }
.ft { width: 72px; margin-left: 22px; flex: none; display: flex; align-items: center; justify-content: center; font-style: normal; }
.bl { color: #3d84a6; font-size: 20px; font-family: "Liberation Sans", sans-serif; letter-spacing: -0.500px; padding-top: 2px; }
.tf { font-size: 20px; letter-spacing: 0; margin-left: 24px; width: 70px; }
.hash { width: 20px; height: 24px; fill: none; stroke-width: 2.600; }
.hash.calc { width: 28px; margin-left: -8px; }
.hb { stroke: #2e7fa3; }
.hg { stroke: #3da584; }

.cards { width: 332px; flex: none; padding-left: 11px; display: flex; flex-direction: column; }
.card { width: 308px; background: #fafafa; border: 3px solid #d6d6d6; padding: 13px 0 0 11px; }
.c-pages { height: 123px; margin-top: 0; }
.c-filters { height: 156px; margin-top: 13px; }
.c-marks { height: 413px; margin-top: 12px; }
.markdd { width: 280px; height: 41px; margin-top: 27px; display: flex; align-items: center; border: 3px solid #d6d6d6; border-radius: 3px; background: #f7f7f7; padding-left: 22px; font-size: 21px; color: #555; }
.md-text { flex: 1; padding-left: 11px; }
.md-btn { width: 36px; height: 100%; border-left: 2px solid #e2e2e2; display: flex; align-items: center; justify-content: center; }
.markgrid { width: 280px; margin-top: 14px; display: grid; grid-template-columns: 86px 84px 86px; column-gap: 12px; row-gap: 11px; }
.mk { height: 84px; border: 3px solid #d6d6d6; display: flex; flex-direction: column; align-items: center; font-size: 21px; color: #555; background: #fafafa; line-height: 26px; }
.mk svg { width: 48px; height: 44px; margin-top: 5px; overflow: visible; }
.mk-t { font-family: "Liberation Serif", serif; font-size: 22px; fill: #555; text-anchor: middle; }

.work { flex: 1; min-width: 0; padding-right: 12px; padding-left: 11px; display: flex; flex-direction: column; margin-left: -12px; }
.shelf { height: 55px; flex: none; display: flex; align-items: center; border: 3px solid #d6d6d6; background: #fafafa; font-size: 25px; color: #444; }
.s-rows { margin-top: 13px; }
.shelf-label { width: 250px; flex: none; height: 100%; border-right: 2px solid #d6d6d6; display: flex; align-items: center; gap: 14px; padding-left: 13px; }
.sh-text { padding-bottom: 2px; }
.pill { margin-left: 4px; width: 296px; height: 40px; border-radius: 14px / 20px; background: #02b27f; color: #fff; display: flex; align-items: center; gap: 11px; padding-left: 24px; font-size: 25.500px; }
.pill-cnt { padding-left: 21px; }
.viz { margin-top: 13px; width: 2116px; height: 1217px; border: 2px solid #b5b5b5; background: #fff; }
.chart { display: block; width: 2112px; height: 1213px; font-family: "Lato", sans-serif; }
.c-title { font-family: "Lato", sans-serif; font-weight: 300; font-size: 42px; letter-spacing: 1.400px; fill: #333; }
.grid path { fill: none; stroke: #f1f1f1; stroke-width: 2; }
.zero { stroke: #c4c4c4; stroke-width: 2; stroke-dasharray: 4 3; fill: none; }
.ticks path { stroke: #ececec; stroke-width: 2; fill: none; }
.line { fill: none; stroke: #4e79a7; stroke-width: 6; stroke-linejoin: round; stroke-linecap: round; }
.ylab text { font-size: 25px; fill: #666; text-anchor: end; }
.xlab text { font-size: 25px; fill: #666; text-anchor: middle; }
.axt { font-size: 26px; fill: #333; text-anchor: middle; }
.axy { font-size: 25.500px; }
.nullt { font-size: 23px; font-weight: 700; letter-spacing: 1px; fill: #fff; text-anchor: middle; }

.tabs { height: 62px; flex: none; display: flex; background: linear-gradient(180deg, #e6e6e6, #e0e0e0); border-top: 2px solid #d2d2d2; border-bottom: 3px solid #d4d4d4; font-size: 25px; color: #666; }
.tab { width: 114px; flex: none; display: flex; align-items: center; justify-content: center; gap: 10px; border-right: 2px solid #cacaca; padding-bottom: 2px; }
.t-ds { width: 261px; justify-content: flex-start; padding-left: 20px; }
.t-s1 { width: 115px; }
.t-active { background: #f8f8f8; font-weight: 700; color: #555; }
.t-10 { width: 130px; }
.t-story { width: 148px; }
.t-add { width: 62px; padding-left: 4px; }
.t-add2 { width: 64px; padding-left: 4px; }

.status { flex: 1; min-height: 0; position: relative; display: flex; align-items: center; background: linear-gradient(180deg, #e9e9e9, #cfcfcf); font-size: 21px; color: #333; padding: 0 0 2px 24px; }
.st-b { margin-left: 33px; }
.st-c { margin-left: 33px; }
.st-sp { position: absolute; top: 0; bottom: 0; width: 2px; background: #c4c4c4; }
.s1 { left: 2129px; }
.s2 { left: 2384px; }
.s3 { left: 2437px; }
.s4 { left: 2491px; }
.s5 { left: 2586px; }
.s6 { left: 2727px; }
.st-nav { position: absolute; left: 2602px; top: 11px; }
.st-grid { position: absolute; left: 2745px; top: 9px; }

.dock { width: 2690px; height: 133px; flex: none; margin: 4px 0 0 95px; display: flex; align-items: flex-start; padding-left: 3px; border-radius: 40px; border: 2px solid #45385e; background: linear-gradient(90deg, #1c1233 0, #1f1138 45%, #2a1050 60%, #45166c 70%, #45166c 78%, #25103f 92%, #201038 100%); }
.di { width: 112px; height: 100%; flex: none; display: flex; flex-direction: column; align-items: center; padding-top: 18px; }
.di svg { width: 83px; height: 83px; flex: none; overflow: visible; }
.di-tb svg { margin-left: 4px; }
.dot { width: 6px; height: 6px; border-radius: 50%; background: #c09be0; margin-top: 21px; }
.ddiv { width: 2px; height: 98px; margin-top: 16px; background: #76608f; flex: none; }
.d1 { margin-left: 27px; margin-right: 22px; }
.d2 { margin-left: 27px; margin-right: 24px; }
.term { font-family: "Liberation Mono", monospace; font-size: 24px; fill: #f2f2f2; }
.pg-q { font-family: "Liberation Serif", serif; font-size: 58px; fill: #ef9a30; }
```
